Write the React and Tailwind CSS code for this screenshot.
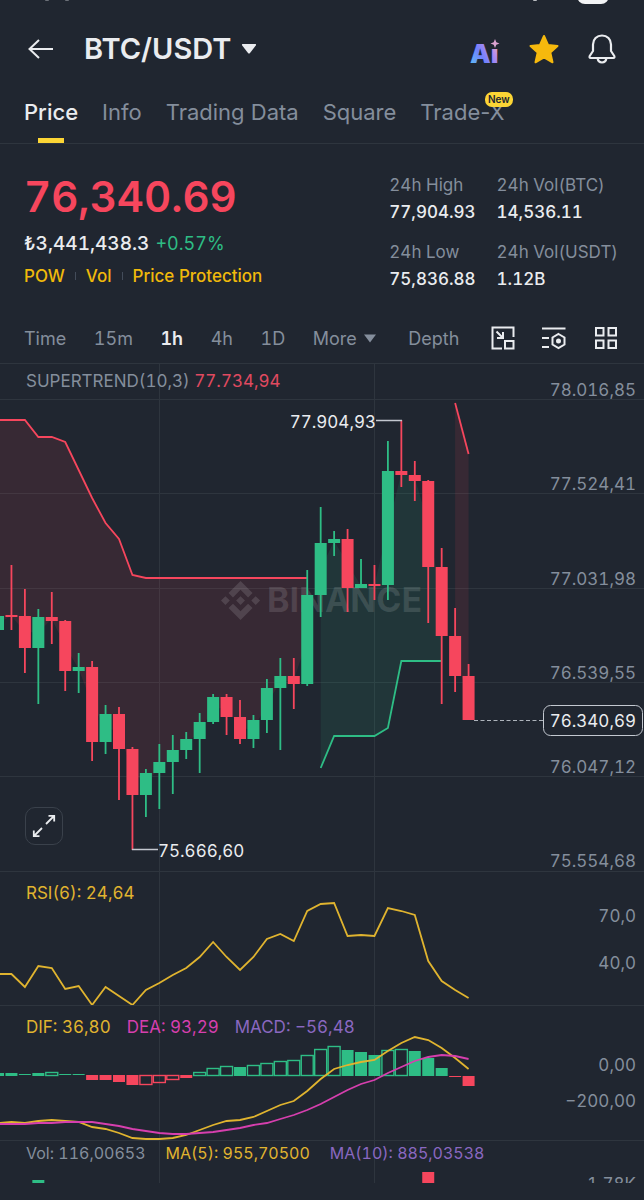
import React, { useState } from 'react'

const RED = '#f6465d'
const GREEN = '#2ebd85'
const GOLD = '#e0b42f'
const PINK = '#d63fae'
const LINE = '#2e353e'

const tabs = ['Price', 'Info', 'Trading Data', 'Square', 'Trade-X']
const intervals = ['Time', '15m', '1h', '4h', '1D']

const stats = [
  ['24h High', '77,904.93'],
  ['24h Vol(BTC)', '14,536.11'],
  ['24h Low', '75,836.88'],
  ['24h Vol(USDT)', '1.12B'],
]

// direction, body top, body bottom, high, low
const candles = [
  ['up', 616, 630, 616, 630],
  ['down', 615, 617, 565, 630],
  ['down', 616, 648, 589, 673],
  ['up', 617, 648, 609, 704],
  ['down', 617, 621, 592, 644],
  ['down', 621, 671, 620, 691],
  ['up', 667, 671, 653, 693],
  ['down', 667, 742, 661, 761],
  ['up', 714, 742, 705, 754],
  ['down', 714, 749, 707, 800],
  ['down', 749, 795, 747, 850],
  ['up', 773, 795, 769, 817],
  ['up', 762, 773, 744, 809],
  ['up', 750, 762, 735, 794],
  ['up', 739, 750, 732, 759],
  ['up', 722, 739, 713, 773],
  ['up', 697, 722, 694, 724],
  ['down', 697, 717, 694, 735],
  ['down', 717, 739, 700, 744],
  ['up', 720, 739, 715, 748],
  ['up', 688, 720, 679, 733],
  ['up', 676, 688, 658, 750],
  ['down', 676, 684, 658, 709],
  ['up', 595, 684, 570, 686],
  ['up', 543, 595, 507, 617],
  ['up', 539, 543, 531, 556],
  ['down', 539, 588, 529, 612],
  ['up', 584, 588, 559, 588],
  ['down', 584, 586, 565, 600],
  ['up', 471, 585, 441, 600],
  ['down', 471, 475, 420, 487],
  ['down', 475, 481, 461, 501],
  ['down', 481, 567, 480, 623],
  ['down', 567, 636, 548, 704],
  ['down', 636, 676, 608, 692],
  ['down', 676, 720, 664, 720],
]

const rsi = [
  974, 974, 987, 966, 968, 989, 986, 1005, 987, 996, 1005, 990, 983, 975, 968, 957, 942, 957,
  970, 957, 939, 934, 941, 911, 904, 903, 936, 935, 936, 908, 911, 915, 961, 981, 990, 998,
]

const dif = [
  1123, 1122, 1123, 1121, 1120, 1121, 1122, 1127, 1129, 1133, 1138, 1139, 1139, 1138, 1135, 1130, 1125, 1121,
  1120, 1117, 1111, 1105, 1101, 1091, 1079, 1069, 1065, 1062, 1060, 1051, 1043, 1037, 1040, 1048, 1058, 1069,
]

const dea = [
  1124, 1124, 1124, 1123, 1123, 1122, 1122, 1122, 1124, 1126, 1129, 1131, 1133, 1134, 1134, 1133, 1132, 1130,
  1128, 1125, 1123, 1119, 1115, 1110, 1104, 1097, 1090, 1084, 1080, 1073, 1067, 1061, 1057, 1055, 1056, 1059,
]

// direction, filled, top, bottom
const macd = [
  ['up', true, 1073, 1076],
  ['up', true, 1073, 1076],
  ['up', true, 1074, 1075],
  ['up', true, 1073, 1076],
  ['up', false, 1072, 1076],
  ['up', true, 1074, 1075],
  ['up', true, 1074, 1075],
  ['down', true, 1075, 1080],
  ['down', true, 1075, 1080],
  ['down', true, 1075, 1082],
  ['down', true, 1075, 1085],
  ['down', false, 1075, 1085],
  ['down', false, 1075, 1083],
  ['down', false, 1075, 1080],
  ['down', true, 1075, 1078],
  ['up', false, 1072, 1076],
  ['up', false, 1068, 1076],
  ['up', false, 1066, 1076],
  ['up', true, 1067, 1076],
  ['up', false, 1065, 1076],
  ['up', false, 1063, 1076],
  ['up', false, 1061, 1076],
  ['up', false, 1060, 1076],
  ['up', false, 1055, 1076],
  ['up', false, 1049, 1076],
  ['up', false, 1046, 1076],
  ['up', true, 1050, 1076],
  ['up', true, 1052, 1076],
  ['up', true, 1055, 1076],
  ['up', false, 1050, 1076],
  ['up', false, 1049, 1076],
  ['up', true, 1051, 1076],
  ['up', true, 1058, 1076],
  ['up', true, 1068, 1076],
  ['down', true, 1076, 1077],
  ['down', true, 1076, 1086],
]

const trendDown = [420, 420, 420, 437, 437, 442, 470, 498, 523, 539, 575].concat(Array(13).fill(578))
const trendUp = [768, 736, 736, 736, 736, 728, 661, 661, 661, 661]
const trendLast = [403, 454]

const x = (i) => -2 + 13.445 * i
const color = (dir) => (dir === 'up' ? GREEN : RED)
const toPoints = (values, from = 0) => values.map((v, i) => `${x(from + i)},${v}`).join(' ')

function Band({ values, from = 0, stroke }) {
  const mids = values.map((_, i) => {
    const c = candles[from + i]
    return `${x(from + i)},${(c[1] + c[2]) / 2}`
  })
  return (
    <>
      <polygon points={`${toPoints(values, from)} ${mids.reverse().join(' ')}`} fill={stroke} fillOpacity="0.11" />
      <polyline points={toPoints(values, from)} fill="none" stroke={stroke} strokeWidth="1.8" />
    </>
  )
}

// All panes share one vertical coordinate space; each shows its own slice of it.
function Pane({ top, height, label, legend, children }) {
  return (
    <section className="relative grid" aria-label={label}>
      <svg viewBox={`0 ${top} 644 ${height}`} className="block w-full [grid-area:1/1]" fontSize="17" fill="#848e9c">
        <path d={`M159.5 ${top}v${height}M374.5 ${top}v${height}M0 ${top}.5h644`} stroke={LINE} />
        {children}
      </svg>
      <div className="flex self-start pl-[26px] text-[17px] leading-6 [grid-area:1/1]">{legend}</div>
    </section>
  )
}

function AxisLabel({ y, children }) {
  return <text x="636" y={y} textAnchor="end">{children}</text>
}

function PriceChart() {
  const axis = [
    [399, '78.016,85'],
    [493, '77.524,41'],
    [588, '77.031,98'],
    [682, '76.539,55'],
    [776, '76.047,12'],
    [870, '75.554,68'],
  ]
  return (
    <>
      <path d={axis.slice(0, 5).map(([y]) => `M0 ${y}.5h644`).join('')} stroke={LINE} />
      <Band values={trendDown} stroke={RED} />
      <Band values={trendUp} from={24} stroke={GREEN} />
      <Band values={trendLast} from={34} stroke={RED} />
      <g fill="#fff" fillOpacity="0.13">
        <path
          transform="translate(221 581) scale(1.63)"
          d="M16.624 13.9202l2.7175 2.7154-7.353 7.353-7.353-7.352 2.7175-2.7164 4.6355 4.6595 4.6356-4.6595zm4.6366-4.6366L24 12l-2.7154 2.7164L18.5682 12l2.6924-2.7164zm-9.272.001l2.7163 2.6914-2.7164 2.7174v-.001L9.2721 12l2.7164-2.7154zm-9.2722-.001L5.4088 12l-2.6914 2.6924L0 12l2.7164-2.7164zM11.9885.0115l7.353 7.329-2.7174 2.7154-4.6356-4.6356-4.6355 4.6595-2.7174-2.7154 7.353-7.353z"
        />
        <text x="267" y="612" fontSize="34" fontWeight="700">BINANCE</text>
      </g>
      {candles.map(([dir, open, close, high, low], i) => (
        <g key={i} fill={color(dir)}>
          <rect x={x(i) - 0.9} y={high} width="1.8" height={low - high} />
          <rect x={x(i) - 6} y={open} width="12" height={close - open} />
        </g>
      ))}
      <path d="M376 420.5h26M132 849.5h26" stroke="#c3c8d0" strokeWidth="1.4" />
      <g fill="#eaecef">
        <text x="376" y="428" textAnchor="end">77.904,93</text>
        <text x="158" y="857">75.666,60</text>
      </g>
      {axis.map(([y, value]) => <AxisLabel key={value} y={y - 3}>{value}</AxisLabel>)}
      <path d="M474 720.5h69" stroke="#aeb4bc" strokeDasharray="4 2.5" />
      <rect x="543.5" y="705.5" width="99" height="30" rx="7" fill="#202630" stroke="#c3c8d0" />
      <text x="636" y="727" textAnchor="end" fill="#eaecef">76.340,69</text>
    </>
  )
}

function MacdChart() {
  return (
    <>
      {macd.map(([dir, filled, top, bottom], i) =>
        filled ? (
          <rect key={i} x={x(i) - 6} y={top} width="12" height={bottom - top} fill={color(dir)} />
        ) : (
          <rect key={i} x={x(i) - 6} y={top + 0.5} width="12" height={bottom - top - 1} fill="none" stroke={color(dir)} strokeWidth="1.4" />
        )
      )}
      <polyline points={toPoints(dif)} fill="none" stroke={GOLD} strokeWidth="1.8" />
      <polyline points={toPoints(dea)} fill="none" stroke={PINK} strokeWidth="1.8" />
      <AxisLabel y={1071}>0,00</AxisLabel>
      <AxisLabel y={1107}>−200,00</AxisLabel>
    </>
  )
}

function StatusBar() {
  return (
    <div className="flex h-[5px] items-start overflow-hidden pr-[35px] pl-[45px]">
      <span className="h-px w-1 rounded-b bg-[#6b7078]" />
      <span className="ml-4 h-px w-1 rounded-b bg-[#6b7078]" />
      <span className="mr-10 ml-auto h-px w-1 rounded-b bg-[#b9bcc0]" />
      <span className="-mt-3 h-4 w-8 rounded-full bg-[#f2f3f5]" />
    </div>
  )
}

function AiIcon() {
  return (
    <svg width="32" height="32" viewBox="0 -5 32 32" className="overflow-visible" aria-hidden="true">
      <defs>
        <linearGradient id="ai" gradientUnits="userSpaceOnUse" x1="2" y1="24" x2="29" y2="6">
          <stop offset="0" stopColor="#5fb8f5" />
          <stop offset="0.4" stopColor="#7180fb" />
          <stop offset="0.75" stopColor="#b48cf0" />
          <stop offset="1" stopColor="#f0a9b8" />
        </linearGradient>
      </defs>
      <text x="2" y="25" fontSize="26" fontWeight="900" fill="url(#ai)">Aı</text>
      <path d="M27 1l1.300 3.200 3.200 1.300-3.200 1.300-1.300 3.200-1.300-3.200-3.200-1.300 3.200-1.300z" fill="#dba3d0" />
    </svg>
  )
}

export default function App() {
  const [tab, setTab] = useState('Price')
  const [interval, setInterval] = useState('1h')

  return (
    <main className="min-h-screen bg-[#202630] pb-4 font-['Inter','Liberation_Sans',sans-serif] text-[#eaecef] tabular-nums">
      <StatusBar />
      <header className="flex h-22 items-center pr-7 pl-6">
        <button aria-label="Back" className="mr-7">
          <svg width="32" height="24" viewBox="0 0 32 24" fill="none" stroke="currentColor" strokeWidth="2">
            <path d="M29 12H6M15 3l-9.500 9 9.500 9" />
          </svg>
        </button>
        <button className="flex items-center gap-[10px] text-[29px] leading-9 font-semibold">
          BTC/USDT
          <svg width="16" height="10" viewBox="0 0 16 10" fill="currentColor" aria-hidden="true">
            <path d="M1.500 0h13q1 .5.3 1.500L9 9q-1 1-2 0L1.200 1.500Q.5.500 1.500 0z" />
          </svg>
        </button>
        <div className="ml-auto flex items-center gap-7">
          <button aria-label="Ai"><AiIcon /></button>
          <button aria-label="Favorite">
            <svg width="32" height="32" viewBox="0 0 32 32" fill="#f6b90d" stroke="#f6b90d" strokeWidth="2" strokeLinejoin="round">
              <path d="M16 3l4 9 9.500 1-7.200 6.500 2.200 9.800L16 24.500l-8.500 4.800 2.200-9.800L2.500 13l9.500-1z" />
            </svg>
          </button>
          <button aria-label="Alerts">
            <svg width="28" height="32" viewBox="0 0 28 32" fill="none" stroke="currentColor" strokeWidth="2.200" strokeLinejoin="round">
              <path d="M14 2.500c-5.200 0-9 3.800-9 9V18l-3.300 5q-.6 2 1 2h22.600q1.600 0 1-2L23 18v-6.500c0-5.200-3.800-9-9-9z" />
              <path d="M9.500 25c.5 3 2.200 4.500 4.500 4.500s4-1.500 4.500-4.500" />
            </svg>
          </button>
        </div>
      </header>

      <nav className="flex h-[51px] gap-6 border-b border-[#2e353e] px-6 text-[22px] leading-8 normal-nums">
        {tabs.map((name) => (
          <button
            key={name}
            onClick={() => setTab(name)}
            className={`relative flex flex-col items-center justify-between pt-[3px] whitespace-nowrap ${tab === name ? 'font-medium text-[#eaecef]' : 'text-[#848e9c]'}`}
          >
            {name}
            {tab === name && <span className="h-[5px] w-[26px] bg-[#fcd535]" />}
            {name === 'Trade-X' && (
              <span className="absolute -top-px -right-2 rounded-[7px] bg-[#fcd535] px-[3px] text-[10px] leading-[15px] font-semibold text-[#202630]">New</span>
            )}
          </button>
        ))}
      </nav>

      <div className="flex justify-between pt-6 pr-[26px] pb-5 pl-6">
        <div>
          <h1 className="text-[42px] leading-[58px] font-semibold text-[#f6465d]">76,340.69</h1>
          <p className="flex gap-[6px] text-[19px] leading-9 font-medium">
            ₺3,441,438.3 <span className="text-[18px] font-normal text-[#2ebd85]">+0.57%</span>
          </p>
          <div className="flex items-center gap-[10px] text-[17px] leading-7 font-medium text-[#f0b90b]">
            <a href="#pow">POW</a>
            <span className="h-2 w-px bg-[#434c5a]" />
            <a href="#vol">Vol</a>
            <span className="h-2 w-px bg-[#434c5a]" />
            <a href="#protection">Price Protection</a>
          </div>
        </div>
        <dl className="grid grid-cols-[auto_auto] content-start gap-x-[21px] gap-y-[13px] pt-1 text-[17px] leading-[27px]">
          {stats.map(([label, value]) => (
            <div key={label}>
              <dt className="text-[#848e9c]">{label}</dt>
              <dd className="font-medium">{value}</dd>
            </div>
          ))}
        </dl>
      </div>

      <div className="flex h-[50px] items-center justify-between pr-[26px] pl-6 text-[18px] text-[#848e9c]">
        {intervals.map((name) => (
          <button key={name} onClick={() => setInterval(name)} className={interval === name ? 'font-semibold text-[#eaecef]' : ''}>
            {name}
          </button>
        ))}
        <button className="flex items-center gap-[6px]">
          More
          <svg width="14" height="9" viewBox="0 0 14 9" fill="currentColor" aria-hidden="true"><path d="M1 .5h12L7 8.500z" /></svg>
        </button>
        <button className="ml-1">Depth</button>
        <button aria-label="Floating window" className="ml-1 text-[#eaecef]">
          <svg width="24" height="24" viewBox="0 0 24 24" fill="none" stroke="currentColor" strokeWidth="2">
            <path d="M11 22.500H1.500v-21h21V11M14 15h8.500v7.500H14zM5.500 5.500L12 12M12 6v6H6" />
          </svg>
        </button>
        <button aria-label="Indicators" className="text-[#eaecef]">
          <svg width="24" height="24" viewBox="0 0 24 24" fill="none" stroke="currentColor" strokeWidth="2">
            <path d="M0 2.500h23.500M0 12h7M0 21h7M16.500 8l6 3.500v7l-6 3.500-6-3.500v-7z" />
            <circle cx="16.500" cy="15" r="1.500" fill="currentColor" />
          </svg>
        </button>
        <button aria-label="Layout" className="text-[#eaecef]">
          <svg width="24" height="24" viewBox="0 0 24 24" fill="none" stroke="currentColor" strokeWidth="2">
            <path d="M2 2h7.500v7.500H2zM14.500 2H22v7.500h-7.500zM2 14.500h7.500V22H2zM14.500 14.500H22V22h-7.500z" />
          </svg>
        </button>
      </div>

      <div className="relative">
        <Pane
          top={363}
          height={508}
          label="Price"
          legend={<p className="pt-[6px] text-[#848e9c]">SUPERTREND(10,3) <span className="text-[#e04a60]">77.734,94</span></p>}
        >
          <PriceChart />
        </Pane>
        <button aria-label="Full screen" className="absolute bottom-[26px] left-[25px] grid size-[38px] place-items-center rounded-[10px] border border-[#3a414b] bg-[#202630]">
          <svg width="24" height="24" viewBox="0 0 24 24" fill="none" stroke="currentColor" strokeWidth="1.800">
            <path d="M14 10l8-8M16.500 1.800h5.700v5.700M10 14l-8 8M1.800 16.500v5.700h5.700" />
          </svg>
        </button>
      </div>

      <Pane top={871} height={134} label="RSI" legend={<p className="pt-[10px] text-[#e0b42f]">RSI(6): 24,64</p>}>
        <polyline points={toPoints(rsi)} fill="none" stroke={GOLD} strokeWidth="1.8" />
        <AxisLabel y={922}>70,0</AxisLabel>
        <AxisLabel y={969}>40,0</AxisLabel>
      </Pane>

      <Pane
        top={1005}
        height={135}
        label="MACD"
        legend={
          <p className="flex gap-4 pt-[10px]">
            <span className="text-[#e0b42f]">DIF: 36,80</span>
            <span className="text-[#d63fae]">DEA: 93,29</span>
            <span className="text-[#8a68c0]">MACD: −56,48</span>
          </p>
        }
      >
        <MacdChart />
      </Pane>

      <Pane
        top={1140}
        height={43}
        label="Volume"
        legend={
          <p className="flex gap-5 pt-px text-base">
            <span className="text-[#848e9c]">Vol: 116,00653</span>
            <span className="text-[#e0b42f]">MA(5): 955,70500</span>
            <span className="text-[#8a68c0]">MA(10): 885,03538</span>
          </p>
        }
      >
        <rect x={x(3) - 6} y="1180" width="12" height="3" fill={GREEN} />
        <rect x={x(32) - 6} y="1172" width="12" height="11" fill={RED} />
        <AxisLabel y={1190}>1.78K</AxisLabel>
      </Pane>
    </main>
  )
}
